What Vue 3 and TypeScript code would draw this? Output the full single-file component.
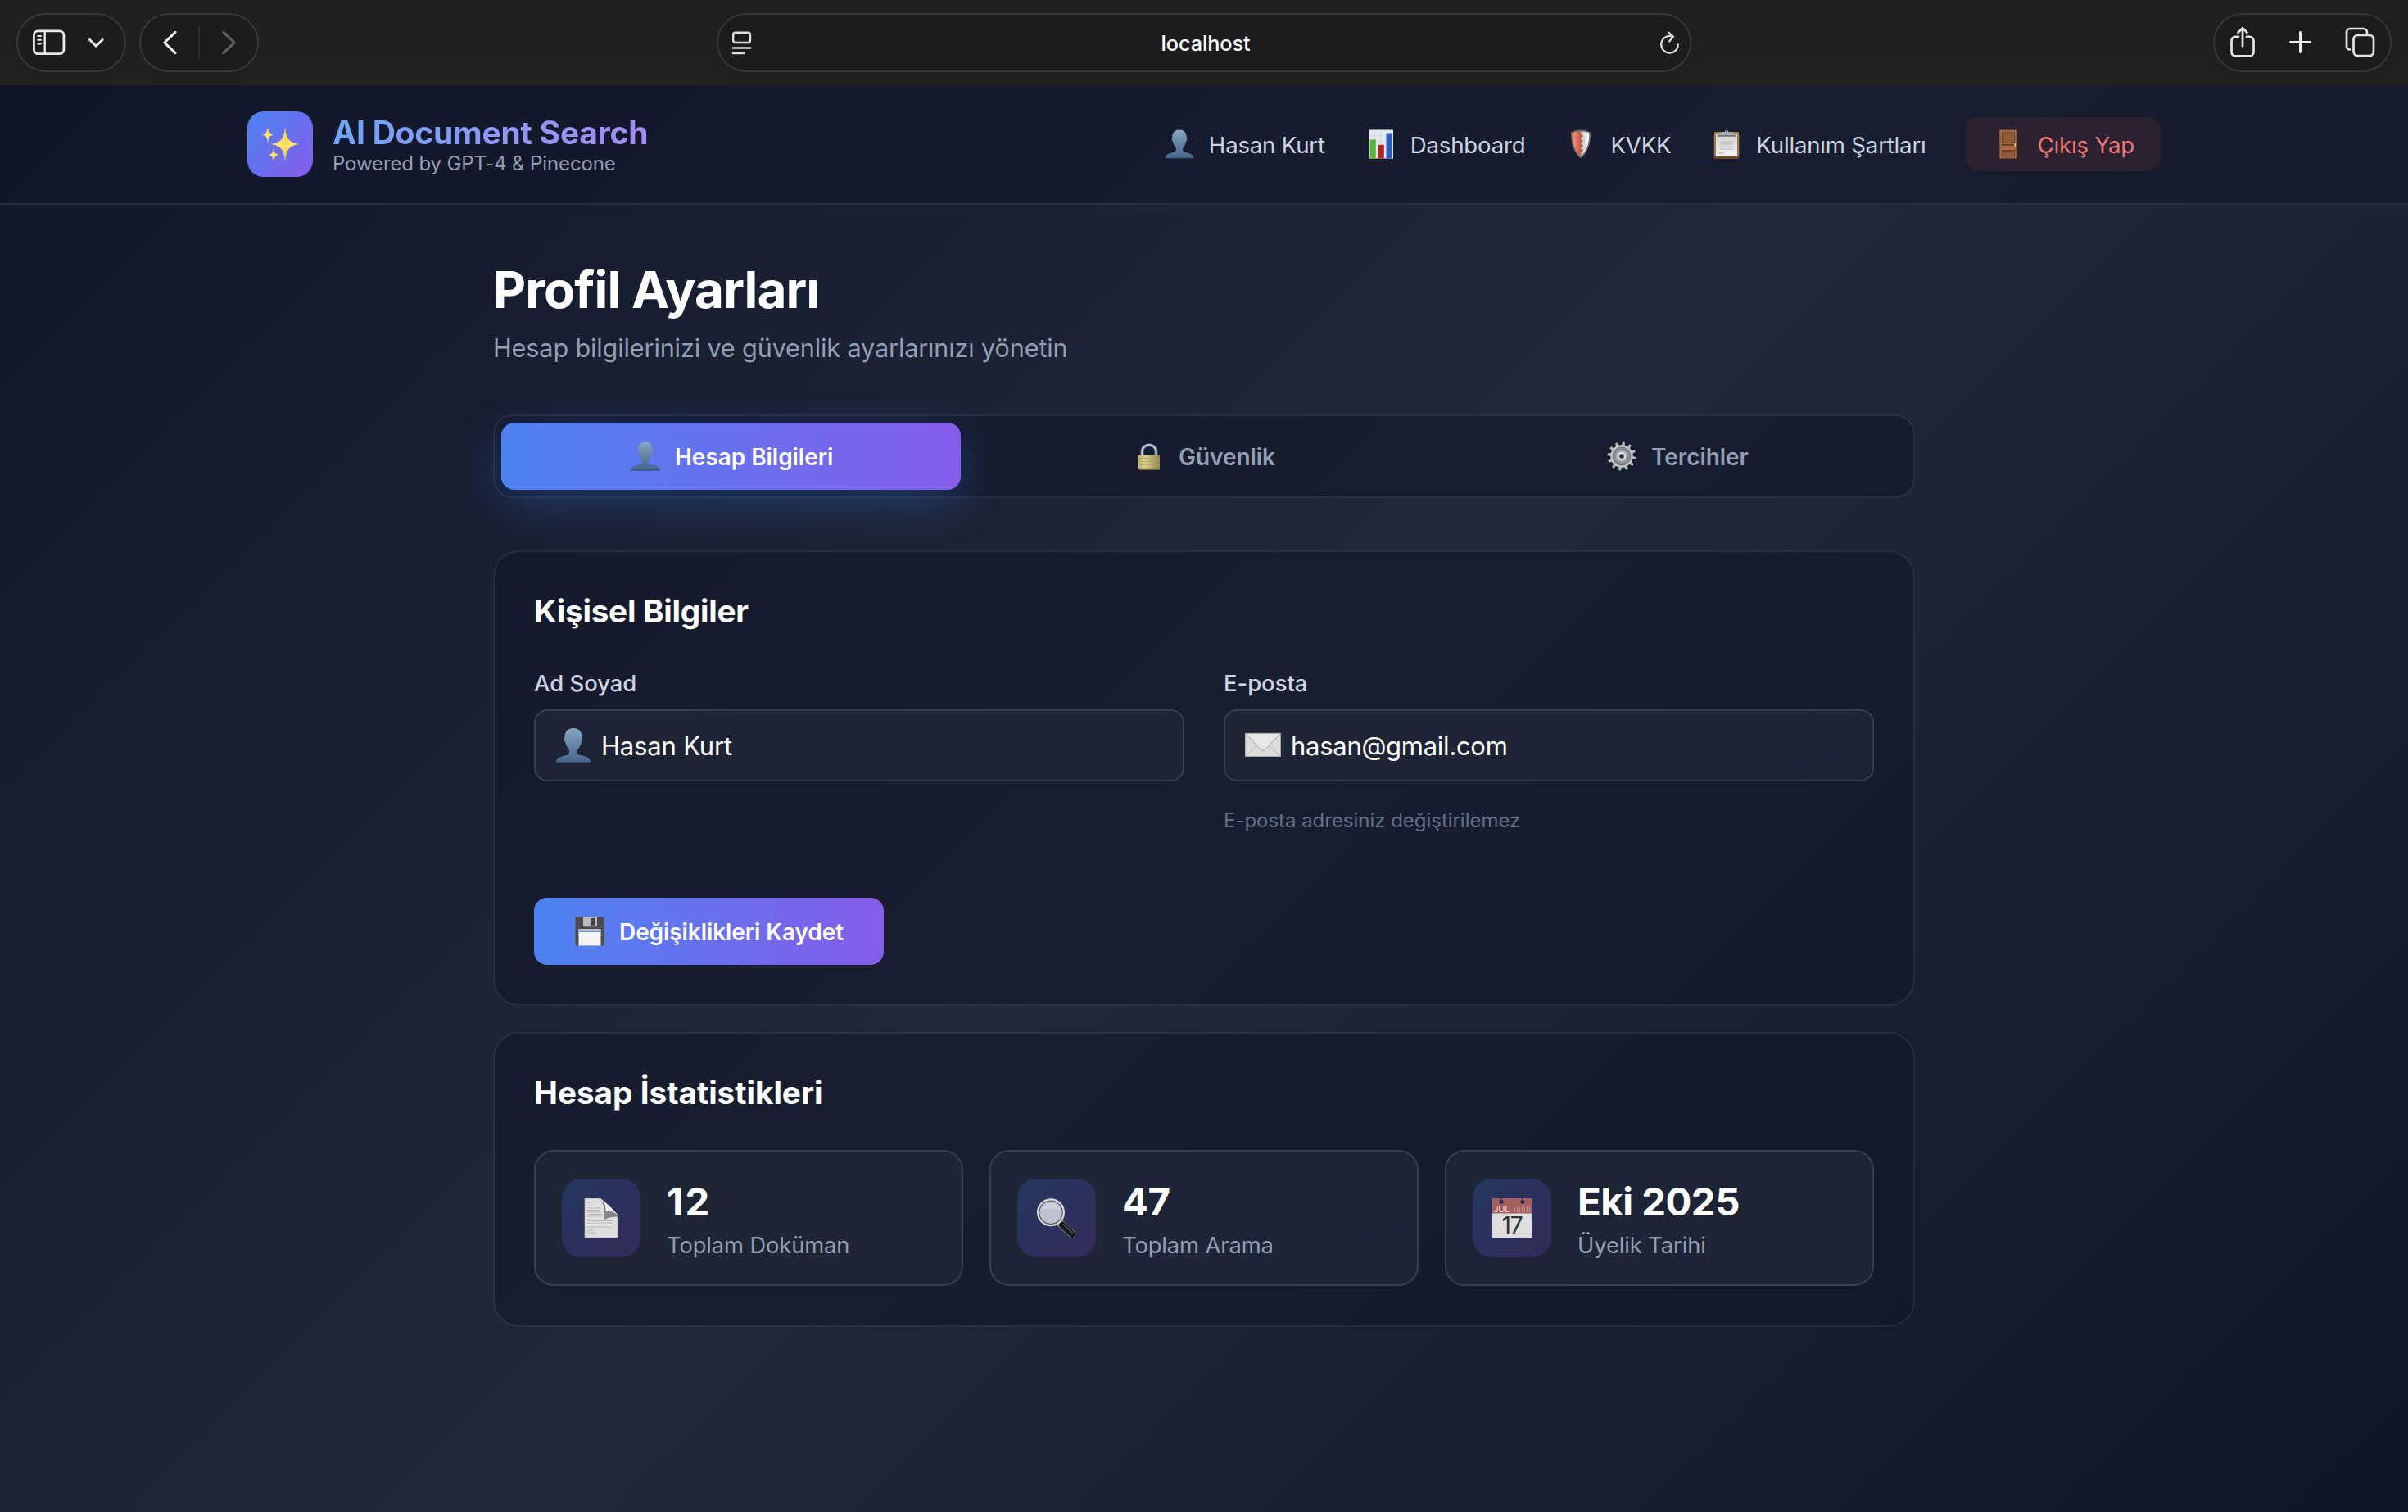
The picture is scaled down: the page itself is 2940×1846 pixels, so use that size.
<script setup lang="ts">
import { ref } from 'vue'

interface NavItem { icon: string; label: string }
interface Tab { id: string; icon: string; label: string }
interface Stat { icon: string; value: string; label: string; tone: string }

const navItems: NavItem[] = [
  { icon: 'person', label: 'Hasan Kurt' },
  { icon: 'chart', label: 'Dashboard' },
  { icon: 'shield', label: 'KVKK' },
  { icon: 'clipboard', label: 'Kullanım Şartları' }
]

const tabs: Tab[] = [
  { id: 'account', icon: 'person', label: 'Hesap Bilgileri' },
  { id: 'security', icon: 'lock', label: 'Güvenlik' },
  { id: 'prefs', icon: 'gear', label: 'Tercihler' }
]
const activeTab = ref('account')

const stats: Stat[] = [
  { icon: 'page', value: '12', label: 'Toplam Doküman', tone: 'wide' },
  { icon: 'magnifier', value: '47', label: 'Toplam Arama', tone: 'normal' },
  { icon: 'calendar', value: 'Eki 2025', label: 'Üyelik Tarihi', tone: 'tight' }
]

// Angles of the gear's twelve teeth.
const teeth = Array.from({ length: 12 }, (_, i) => i * 30)
</script>

<template>
  <svg class="sprite" width="0" height="0" aria-hidden="true">
    <defs>
      <linearGradient id="gPerson" x1="0" y1="0" x2="0" y2="1">
        <stop offset="0" stop-color="#86a6c4" /><stop offset="0.5" stop-color="#6484a4" /><stop offset="0.95" stop-color="#4a688f" /><stop offset="1" stop-color="#2f4668" />
      </linearGradient>
      <linearGradient id="gSpark" x1="0" y1="0" x2="0" y2="1">
        <stop offset="0" stop-color="#f0c05c" /><stop offset="0.5" stop-color="#ffe368" /><stop offset="1" stop-color="#f3c34f" />
      </linearGradient>
      <linearGradient id="gPaper" x1="0" y1="0" x2="0" y2="1">
        <stop offset="0" stop-color="#d2d2d2" /><stop offset="1" stop-color="#f4f4f4" />
      </linearGradient>
      <linearGradient id="gBrass" x1="0" y1="0" x2="1" y2="0">
        <stop offset="0" stop-color="#b9b069" /><stop offset="0.3" stop-color="#d8d08c" /><stop offset="1" stop-color="#8f8750" />
      </linearGradient>
      <linearGradient id="gShieldRed" x1="0" y1="0" x2="1" y2="0">
        <stop offset="0" stop-color="#f29a85" /><stop offset="1" stop-color="#b8452c" />
      </linearGradient>
      <linearGradient id="gShieldWhite" x1="0" y1="0" x2="1" y2="0">
        <stop offset="0" stop-color="#b9bcc0" /><stop offset="1" stop-color="#ffffff" />
      </linearGradient>
    </defs>

    <symbol id="person" viewBox="0 0 40 40">
      <path fill="url(#gPerson)" d="M20 2.5c5.4 0 8.6 3.4 8.7 8.3 0 1.2.1 1.7.4 2.4.5 1-.1 2.7-.9 3.4-.6 3.2-2.100 5.900-4 7.900-.3 3.200.3 4.700 3.200 5.600 5.600 1.300 9.800 2.400 10.400 7.400H2.200c.6-5 4.800-6.100 10.400-7.400 2.900-.9 3.500-2.400 3.200-5.600-1.900-2-3.400-4.700-4-7.900-.8-.7-1.400-2.400-.9-3.400.3-.7.4-1.200.4-2.400.1-4.900 3.300-8.300 8.700-8.300z" />
    </symbol>

    <symbol id="chart" viewBox="0 0 40 40">
      <rect x="5" y="2.500" width="30" height="35" fill="#e3e9f0" />
      <path d="M5 9h30M5 16h30M5 23h30M5 30h30M12.500 2.500v35M20 2.500v35M27.500 2.500v35" stroke="#cfd7e1" stroke-width=".7" />
      <rect x="6.600" y="14.500" width="7.200" height="23" fill="#56b83a" />
      <rect x="16.600" y="20.800" width="7.200" height="16.700" fill="#b3271e" />
      <rect x="26.500" y="6.500" width="7.300" height="31" fill="#2a5cc0" />
    </symbol>

    <symbol id="shield" viewBox="0 0 40 40">
      <path d="M20 2.500c4.500 0 8.500 1 12 3 .4 13-3 24.500-12 32C11 30 7.600 18.500 8 5.500c3.500-2 7.500-3 12-3z" fill="#70665f" />
      <path d="M20 4.200c4 0 7.300.8 10.300 2.300.2 12-2.800 22-10.300 29z" fill="url(#gShieldWhite)" />
      <path d="M20 4.200c-4 0-7.300.8-10.300 2.300-.2 12 2.800 22 10.300 29v-5l3-3-4-2.500 4-3-4-3 4-3-4-3 4-3-3-2.500z" fill="url(#gShieldRed)" />
    </symbol>

    <symbol id="clipboard" viewBox="0 0 40 40">
      <rect x="4.700" y="5" width="30.600" height="32.500" rx="1.800" fill="#a5793f" />
      <rect x="4.700" y="34.500" width="30.600" height="3" rx="1" fill="#6d4a22" />
      <rect x="7" y="8" width="26" height="26.800" fill="url(#gPaper)" />
      <path d="M12 17h16M12 20h16M12 23h16M12 26h16M10 31h7" stroke="#c4c4c4" stroke-width="1.300" />
      <path d="M9 9.800V7.500L15 5h2.500a2.600 2.600 0 0 1 5 0H25l6 2.500v2.300z" fill="#a9adb6" />
      <path d="M9 9.300h22v1.300H9z" fill="#5f5d5a" />
      <circle cx="20" cy="4.400" r="1" fill="#4b4f5b" />
    </symbol>

    <symbol id="door" viewBox="0 0 40 40">
      <rect x="9.300" y="2.500" width="21.500" height="35" fill="#9c6440" />
      <rect x="12.500" y="6" width="15" height="12" fill="#925a37" stroke="#74452a" stroke-width="1" />
      <path d="M12 21.500h16v-1.600H12zM12 28.800h16v-1.600H12z" fill="#5c3520" />
      <rect x="12.500" y="22.500" width="15" height="4.500" fill="#a76e48" />
      <rect x="12.500" y="30" width="15" height="5" fill="#90593a" stroke="#74452a" stroke-width=".8" />
      <circle cx="28.600" cy="20.500" r="1.500" fill="#f2d24c" />
      <path d="M28.600 22v2" stroke="#d9b53f" stroke-width="1.200" />
    </symbol>

    <symbol id="lock" viewBox="0 0 40 40">
      <path d="M11.500 20v-5.500c0-11 17-11 17 0V20" fill="none" stroke="#657285" stroke-width="4" />
      <path d="M11.500 20v-5.500c0-11 17-11 17 0V20" fill="none" stroke="#c3d0e0" stroke-width="2" />
      <rect x="7" y="18.500" width="26" height="18" rx=".8" fill="url(#gBrass)" />
      <path d="M7 22.500h26M7 26.500h26M7 30.500h26" stroke="#a89f5c" stroke-width=".6" />
      <path d="M7 34.800h26v1.700H7z" fill="#6a6138" />
    </symbol>

    <symbol id="gear" viewBox="0 0 40 40">
      <g fill="#b4b6b9">
        <path v-for="a in teeth" :key="a" d="M17.900 7.500l.7-5h2.800l.7 5z" :transform="`rotate(${a + 8} 20 20)`" />
      </g>
      <circle cx="20" cy="20" r="13.800" fill="#bfc1c4" />
      <circle cx="20" cy="20" r="10.800" fill="#8c8f93" stroke="#6c6f74" stroke-width="1" />
      <circle cx="20" cy="20" r="8.300" fill="#a5a8ac" stroke="#75787d" stroke-width=".8" />
      <circle cx="20" cy="20" r="5.400" fill="#d9dbde" />
      <circle cx="20" cy="20" r="2.800" fill="#2a2e3d" />
    </symbol>

    <symbol id="floppy" viewBox="0 0 40 40">
      <path d="M2.500 4.500a2 2 0 0 1 2-2h33v34a1 1 0 0 1-1 1h-33a1 1 0 0 1-1-1z" fill="#4c4c4e" />
      <path d="M12 2.500h17v10.300a1.500 1.500 0 0 1-1.500 1.500h-14a1.500 1.500 0 0 1-1.500-1.500z" fill="#b9babd" />
      <rect x="21" y="4" width="5.500" height="8.800" rx=".6" fill="#3f4043" />
      <rect x="6.500" y="17.500" width="27" height="20" fill="#f3f4f6" />
      <path d="M6.500 17.500h27V20h-27z" fill="#d8dde5" />
      <path d="M6.500 19.500h27V21h-27z" fill="#6f9bd6" />
      <path d="M3.600 34h1.300M35.200 34h1.300" stroke="#8b8b8d" stroke-width="1.200" />
    </symbol>

    <symbol id="envelope" viewBox="0 0 48 48">
      <rect x="2.200" y="9.300" width="43.500" height="28.500" fill="#dcdcdc" />
      <path d="M2.200 37.800L18 22.800M45.700 37.800L30 22.800" stroke="#b9b9b9" stroke-width="1" />
      <path d="M2.200 9.300h43.500L26.300 29.500a3.200 3.200 0 0 1-4.600 0z" fill="#e7e7e7" stroke="#a2a2a2" stroke-width="1" />
      <path d="M2.200 37.500h43.500" stroke="#a9a9a9" stroke-width="1" />
    </symbol>

    <symbol id="page" viewBox="0 0 48 48">
      <path d="M4 0h19l21 20v28H4z" fill="#dedede" />
      <path d="M4 0h19l21 20v28H4z" fill="none" stroke="#b5b5b5" stroke-width=".8" />
      <path d="M7 5h6M7 9.500h16M7 12h16M7 14.500h16M7 17h17M7 19.500h17M7 22h17M7 27.500h32M7 30h30M7 32.500h32M7 35h30M7 39.500h7M7 42h11" stroke="#bcbcbc" stroke-width="1" />
      <path d="M21 1c6 5 8 10 7 25 5-3 11-4 16-3v-4z" fill="#858585" />
      <path d="M21 0c7 4 9 8 8.500 16 5-1 11 0 14.500 4.500C43 18 29 3 21 0z" fill="#f2f2f2" />
    </symbol>

    <symbol id="magnifier" viewBox="0 0 48 48">
      <path d="M28.500 30.500L43 44" stroke="#8b8b8d" stroke-width="9" stroke-linecap="round" />
      <path d="M31 32.500L43 44" stroke="#18181a" stroke-width="7.600" stroke-linecap="round" />
      <path d="M32.500 32L43 42" stroke="#5b5b5e" stroke-width="1.500" stroke-linecap="round" />
      <circle cx="17" cy="17.200" r="15.600" fill="#bfc1d0" stroke="#d9dadd" stroke-width="2.800" />
      <circle cx="17" cy="17.200" r="14.200" fill="none" stroke="#5c5a5b" stroke-width="1.200" />
      <path d="M5.500 14.500a12 12 0 0 1 23 0c-7-2.500-16-2.500-23 0z" fill="#ced0dc" />
    </symbol>
  </svg>

  <div class="window">
    <div class="toolbar">
      <div class="toolbar-left">
        <div class="pill pill-sidebar">
          <svg width="48" height="40" viewBox="36 32 48 40" fill="none" stroke="#e9e9ea" stroke-width="2.800" stroke-linecap="round">
            <rect x="41.400" y="37.900" width="36.500" height="27.700" rx="5" />
            <path d="M54.700 38v27.500" stroke-width="2.400" />
            <path d="M46.300 44h3.600M46.300 48.800h3.600M46.300 53.500h3.600" stroke-width="2" />
          </svg>
          <svg width="28" height="40" viewBox="104 32 28 40" fill="none" stroke="#e9e9ea" stroke-width="3" stroke-linecap="round" stroke-linejoin="round">
            <path d="M109.500 48.500l7.800 7.800 7.800-7.800" />
          </svg>
        </div>
        <div class="pill pill-history">
          <svg width="26" height="40" viewBox="194 32 26 40" fill="none" stroke="#f2f2f3" stroke-width="3" stroke-linecap="round" stroke-linejoin="round">
            <path d="M214 39.300L200.800 52 214 64.700" />
          </svg>
          <i class="pill-divider"></i>
          <svg width="26" height="40" viewBox="266 32 26 40" fill="none" stroke="#626264" stroke-width="3" stroke-linecap="round" stroke-linejoin="round">
            <path d="M273 39.300L286.200 52 273 64.700" />
          </svg>
        </div>
      </div>

      <div class="pill address">
        <svg width="32" height="40" viewBox="890 32 32 40" fill="none" stroke="#dcdcdd" stroke-width="2.400" stroke-linecap="round">
          <rect x="895.200" y="39.700" width="20.800" height="12.300" rx="2.800" />
          <path d="M895 58.500h21.200M895 65h13.500" />
        </svg>
        <span class="address-text">localhost</span>
        <svg width="32" height="40" viewBox="2022 32 32 40" fill="none" stroke="#dcdcdd" stroke-width="2.300" stroke-linecap="round" stroke-linejoin="round">
          <path d="M2048.800 54.300a10.300 10.300 0 1 1-6.600-9.600" />
          <path d="M2037.500 39.800l5.600 5-5 5.700" />
        </svg>
      </div>

      <div class="toolbar-right">
        <div class="pill pill-actions">
          <svg width="40" height="40" viewBox="2718 32 40 40" fill="none" stroke="#e4e4e5" stroke-width="2.700" stroke-linecap="round" stroke-linejoin="round">
            <path d="M2733 44.800h-3.500a5 5 0 0 0-5 5v13.600a5 5 0 0 0 5 5h17a5 5 0 0 0 5-5V49.800a5 5 0 0 0-5-5h-3.500" />
            <path d="M2738 56.300V34.500M2732.500 39.800l5.500-5.500 5.500 5.500" />
          </svg>
          <svg width="34" height="40" viewBox="2792 32 34 40" fill="none" stroke="#f0f0f1" stroke-width="2.900" stroke-linecap="round">
            <path d="M2796.500 51.500h24M2808.500 39.500v24" />
          </svg>
          <svg width="42" height="40" viewBox="2860 32 42 40" fill="none" stroke="#e4e4e5" stroke-width="2.700" stroke-linecap="round">
            <rect x="2873.500" y="43" width="24.500" height="25" rx="5" />
            <path d="M2869.500 60.500h-.5a4 4 0 0 1-4-4V39.500a4.500 4.500 0 0 1 4.500-4.500h16a4.500 4.500 0 0 1 4.500 4.500v.5" />
          </svg>
        </div>
      </div>
    </div>

    <div class="page">
      <header class="header">
        <div class="header-inner">
          <div class="brand">
            <div class="brand-mark">
              <svg width="80" height="80" viewBox="0 0 80 80" fill="url(#gSpark)">
                <path d="M46 18.500c1.500 13.500 3.500 19 17 21.500-13.500 2.500-15.500 8-17 21.500-1.500-13.500-3.500-19-17-21.500 13.500-2.500 15.500-8 17-21.500z" />
                <path d="M25 18c.8 6.500 1.700 9.300 7 10.500-5.300 1.200-6.200 4-7 10.500-.8-6.500-1.700-9.300-7-10.500 5.300-1.200 6.200-4 7-10.500z" />
                <path d="M32 44c.7 5.700 1.500 8 6.500 9-5 1-5.800 3.300-6.500 9-.7-5.700-1.500-8-6.500-9 5-1 5.800-3.300 6.500-9z" />
              </svg>
            </div>
            <div class="brand-text">
              <div class="brand-title">AI Document Search</div>
              <div class="brand-sub">Powered by GPT-4 &amp; Pinecone</div>
            </div>
          </div>
          <nav class="nav">
            <a v-for="item in navItems" :key="item.label" class="nav-item">
              <svg class="emoji"><use :href="'#' + item.icon" /></svg>
              <span>{{ item.label }}</span>
            </a>
            <button class="logout">
              <svg class="emoji"><use href="#door" /></svg>
              <span>Çıkış Yap</span>
            </button>
          </nav>
        </div>
      </header>

      <main class="main">
        <h1>Profil Ayarları</h1>
        <p class="lead">Hesap bilgilerinizi ve güvenlik ayarlarınızı yönetin</p>

        <div class="tabs">
          <button
            v-for="tab in tabs"
            :key="tab.id"
            class="tab"
            :class="{ active: tab.id === activeTab }"
            @click="activeTab = tab.id"
          >
            <svg class="emoji"><use :href="'#' + tab.icon" /></svg>
            <span>{{ tab.label }}</span>
          </button>
        </div>

        <section class="card">
          <h2 class="h-personal">Kişisel Bilgiler</h2>
          <div class="form-grid">
            <div class="field">
              <label>Ad Soyad</label>
              <div class="input">
                <svg class="emoji-lg"><use href="#person" /></svg>
                <span>Hasan Kurt</span>
              </div>
            </div>
            <div class="field">
              <label>E-posta</label>
              <div class="input input-email">
                <svg class="emoji-lg"><use href="#envelope" /></svg>
                <span>hasan@gmail.com</span>
              </div>
              <p class="hint">E-posta adresiniz değiştirilemez</p>
            </div>
          </div>
          <button class="save">
            <svg class="emoji"><use href="#floppy" /></svg>
            <span>Değişiklikleri Kaydet</span>
          </button>
        </section>

        <section class="card card-stats">
          <h2 class="h-stats">Hesap İstatistikleri</h2>
          <div class="stats">
            <div v-for="stat in stats" :key="stat.label" class="stat">
              <div class="stat-icon">
                <svg v-if="stat.icon === 'calendar'" class="emoji-lg" viewBox="0 0 48 48">
                  <rect width="48" height="48" fill="#dedede" />
                  <rect width="48" height="18.500" fill="#a4605f" />
                  <path d="M11 0v3M37 0v3" stroke="#26355f" stroke-width="1.500" />
                  <circle cx="11" cy="4.500" r="2.500" fill="#26305c" />
                  <circle cx="37" cy="4.500" r="2.500" fill="#26305c" />
                  <text x="2" y="16.800" font-family="Liberation Sans, sans-serif" font-size="10.800" fill="#eadcdc">JUL</text>
                  <path d="M27.500 12v5M30.500 11v6M33.500 10.500v6.500M36.500 10v7M39.500 9.500v7.500M42.500 9v8M45.500 8.500v8.500" stroke="#c69493" stroke-width=".9" />
                  <text x="24" y="43.300" text-anchor="middle" font-family="Inter, sans-serif" font-size="28" letter-spacing="-1" fill="#303030">17</text>
                </svg>
                <svg v-else class="emoji-lg"><use :href="'#' + stat.icon" /></svg>
              </div>
              <div class="stat-text">
                <div class="stat-value" :class="stat.tone">{{ stat.value }}</div>
                <div class="stat-label">{{ stat.label }}</div>
              </div>
            </div>
          </div>
        </section>
      </main>
    </div>
  </div>
</template>

<style>
body { background: #10162a; }
</style>

<style scoped>
* { box-sizing: border-box; }
.sprite { position: absolute; }
svg { display: block; flex: none; }
h1, h2, p { margin: 0; }
button { border: 0; margin: 0; font: inherit; }
span { white-space: nowrap; }

.window {
  display: flex;
  flex-direction: column;
  width: 2940px;
  height: 1846px;
  overflow: hidden;
  font-family: Inter, "Noto Sans", sans-serif;
}

/* Browser toolbar */
.toolbar {
  display: grid;
  grid-template-columns: 1fr 1190px 1fr;
  flex: none;
  height: 104px;
  padding: 16px 20px 0;
  background: linear-gradient(#1f2022, #202123 70%, #212221);
}
.toolbar-left { display: flex; gap: 16px; }
.toolbar-right { display: flex; justify-content: flex-end; }
.pill {
  display: flex;
  align-items: center;
  height: 72px;
  border: 2px solid #363738;
  border-radius: 36px;
  background: #1c1c1e;
  box-shadow: 0 4px 20px rgba(0, 0, 0, 0.08);
}
.pill-sidebar { width: 134px; padding-left: 14px; gap: 20px; }
.pill-history { width: 146px; padding-left: 22px; gap: 22px; }
.pill-divider { width: 2px; height: 40px; background: #2d2d2f; }
.address { justify-content: space-between; padding: 0 9px 0 13px; }
.address-text {
  color: #fff;
  font-size: 25.3px;
  font-weight: 500;
  letter-spacing: -0.1px;
}
.pill-actions { width: 218px; padding-left: 14px; gap: 34px; }

/* Page */
.page {
  flex: 1;
  background: linear-gradient(135deg, #10162a 0%, #202939 50%, #10152a 100%);
}
.header {
  height: 146px;
  border-bottom: 2px solid #252f40;
  background: rgba(18, 24, 42, 0.6);
}
.header-inner {
  display: flex;
  align-items: center;
  justify-content: space-between;
  width: 2336px;
  height: 144px;
  margin: 0 auto;
}
.brand { display: flex; align-items: center; gap: 24px; }
.brand-mark {
  width: 80px;
  height: 80px;
  border-radius: 20px;
  background: linear-gradient(135deg, #4b83f1, #865ceb);
}
.brand-title {
  width: max-content;
  font-size: 39px;
  line-height: 46px;
  font-weight: 700;
  letter-spacing: -0.22px;
  color: transparent;
  background: linear-gradient(90deg, #6ea6f7, #a78bf3);
  -webkit-background-clip: text;
  background-clip: text;
}
.brand-sub {
  padding-top: 1px;
  color: #949eb2;
  font-size: 24px;
  line-height: 28px;
  letter-spacing: -0.12px;
}
.nav { display: flex; align-items: center; gap: 48px; }
.nav-item, .logout {
  display: flex;
  align-items: center;
  gap: 16px;
  font-size: 27.6px;
  letter-spacing: -0.19px;
  color: #ccd4e1;
}
.nav-item span, .logout span { padding-top: 2px; }
.logout {
  height: 66px;
  padding: 0 32px;
  border-radius: 16px;
  background: rgba(239, 68, 68, 0.1);
  color: #ea7773;
}
.emoji { width: 40px; height: 40px; }
.emoji-lg { width: 48px; height: 48px; }

.main { width: 1736px; margin: 0 auto; padding-top: 66px; }
h1 {
  color: #fff;
  font-size: 62px;
  line-height: 76px;
  font-weight: 700;
  letter-spacing: -0.9px;
}
.lead {
  margin-top: 9px;
  color: #949eb2;
  font-size: 30.6px;
  line-height: 48px;
  letter-spacing: -0.13px;
}

.tabs {
  display: grid;
  grid-template-columns: repeat(3, 1fr);
  gap: 16px;
  height: 102px;
  margin-top: 57px;
  padding: 8px;
  border: 2px solid rgba(51, 65, 85, 0.42);
  border-radius: 24px;
  background: rgba(19, 24, 42, 0.6);
  background-clip: padding-box;
}
.tab {
  display: flex;
  align-items: center;
  justify-content: center;
  gap: 16px;
  padding: 0;
  border-radius: 16px;
  background: transparent;
  color: #949eb2;
  font-size: 28px;
  font-weight: 600;
  letter-spacing: -0.05px;
}
.tab span, .save span { padding-top: 2px; }
.tab.active {
  color: #fff;
  background: linear-gradient(90deg, #4c83f1, #855deb);
  box-shadow: 0 16px 56px rgba(59, 118, 236, 0.3);
}

.card {
  height: 556px;
  margin-top: 64px;
  padding: 48px;
  border: 2px solid rgba(51, 65, 85, 0.42);
  border-radius: 32px;
  background: rgba(19, 24, 42, 0.6);
  background-clip: padding-box;
}
.card-stats { height: 360px; margin-top: 32px; }
h2 {
  color: #fff;
  font-size: 38.7px;
  line-height: 48px;
  font-weight: 700;
}
.h-personal { letter-spacing: -0.26px; }
.h-stats { letter-spacing: 0; }

.form-grid {
  display: grid;
  grid-template-columns: 1fr 1fr;
  gap: 48px;
  margin-top: 47px;
}
.field { display: flex; flex-direction: column; }
label {
  color: #ccd4e1;
  font-size: 27.5px;
  line-height: 34px;
  font-weight: 500;
  letter-spacing: -0.06px;
}
.input {
  display: flex;
  align-items: center;
  gap: 10px;
  height: 88px;
  margin-top: 15px;
  padding-left: 22px;
  border: 2px solid #343f4f;
  border-radius: 16px;
  background: rgba(38, 46, 62, 0.5);
  color: #fff;
  font-size: 31px;
  letter-spacing: -0.17px;
}
.input span { padding-top: 1px; }
.input-email { letter-spacing: -0.28px; }
.hint {
  margin-top: 33px;
  color: #65718a;
  font-size: 24px;
  line-height: 30px;
  letter-spacing: -0.03px;
}
.save {
  display: flex;
  align-items: center;
  gap: 16px;
  width: 427px;
  height: 82px;
  margin-top: 79px;
  padding: 0 48px;
  border-radius: 16px;
  background: linear-gradient(90deg, #4c83f1, #855deb);
  color: #fff;
  font-size: 28px;
  font-weight: 600;
  letter-spacing: -0.08px;
}

.stats {
  display: grid;
  grid-template-columns: repeat(3, 1fr);
  gap: 32px;
  margin-top: 46px;
}
.stat {
  display: flex;
  align-items: center;
  gap: 32px;
  height: 166px;
  padding: 0 32px;
  border: 2px solid #343f4f;
  border-radius: 24px;
  background: rgba(38, 46, 62, 0.5);
}
.stat-icon {
  display: flex;
  align-items: center;
  justify-content: center;
  width: 96px;
  height: 96px;
  border-radius: 24px;
  background: linear-gradient(135deg, #24375f, #332b5a);
}
.stat-text { padding-top: 4px; }
.stat-value {
  color: #fff;
  font-size: 47.3px;
  line-height: 56px;
  font-weight: 700;
}
.stat-value.normal { letter-spacing: -0.5px; }
.stat-value.wide { letter-spacing: 2.2px; }
.stat-value.tight { letter-spacing: -0.5px; }
.stat-label {
  margin-top: 8px;
  color: #949eb2;
  font-size: 27.3px;
  line-height: 36px;
  letter-spacing: -0.09px;
}
</style>
